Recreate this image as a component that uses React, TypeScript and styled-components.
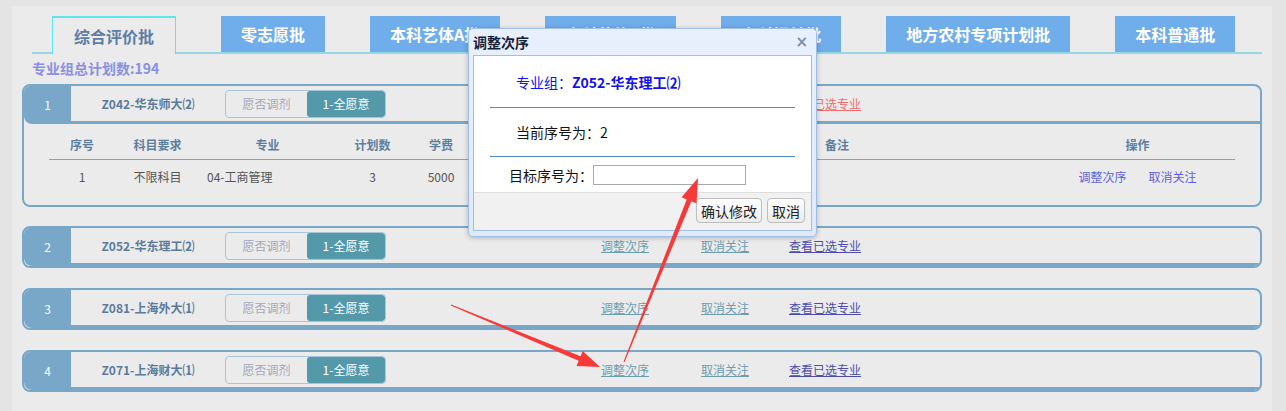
import React from 'react';
import styled, { createGlobalStyle } from 'styled-components';

const GlobalStyle = createGlobalStyle`
  html, body { margin: 0; padding: 0; background: #e4e4e4; }
  body { font-family: "Noto Sans CJK SC", "Noto Sans", sans-serif; }
  * { box-sizing: border-box; }
`;

const Page = styled.div`
  position: relative;
  width: 1286px;
  height: 411px;
  overflow: hidden;
  padding: 6px 14px 0 12px;
`;

const Panel = styled.div`
  background: #ebebeb;
  height: 405px;
  padding: 10px 10px 0 10px;
`;

const TabBar = styled.div`
  display: flex;
  gap: 45px;
  margin-left: 10px;
  padding-left: 20px;
  height: 38px;
  border-bottom: 2px solid #94d8e7;
`;

const Tab = styled.div<{ $active?: boolean }>`
  flex: none;
  height: ${(p) => (p.$active ? '38px' : '36px')};
  padding: 0 ${(p) => (p.$active ? '21px' : '20px')};
  display: flex;
  align-items: ${(p) => (p.$active ? 'flex-start' : 'center')};
  padding-top: ${(p) => (p.$active ? '8px' : '0')};
  font-size: 16px;
  font-weight: bold;
  line-height: 20px;
  white-space: nowrap;
  color: ${(p) => (p.$active ? '#5c7ea6' : '#ffffff')};
  background: ${(p) => (p.$active ? '#ebebeb' : '#70adeb')};
  border: ${(p) => (p.$active ? '1px solid #5ee4e9' : 'none')};
  border-top-width: ${(p) => (p.$active ? '2px' : '0')};
  border-bottom: none;
  margin-bottom: ${(p) => (p.$active ? '-2px' : '0')};
  position: relative;
`;

const Summary = styled.div`
  margin: 4px 0 6px 10px;
  font-size: 14px;
  line-height: 20px;
  font-weight: bold;
  color: #8b8fe0;
`;

const Card = styled.div<{ $expanded?: boolean }>`
  border: 2px solid #79a7c7;
  border-radius: 8px;
  overflow: hidden;
  margin-bottom: ${(p) => (p.$expanded ? '19px' : '20px')};
`;

const Header = styled.div`
  display: flex;
  height: 38px;
`;

const NumCell = styled.div`
  flex: none;
  width: 47px;
  background: #79a7c7;
  border-bottom-left-radius: 8px;
  color: #fff;
  font-size: 12px;
  display: flex;
  align-items: center;
  justify-content: center;
  padding-bottom: 2px;
`;

const HeaderMain = styled.div`
  flex: 1;
  display: flex;
  align-items: center;
  border-bottom: 3px solid #79a7c7;
`;

const GroupName = styled.div`
  flex: none;
  width: 154px;
  text-align: center;
  font-size: 12px;
  font-weight: bold;
  color: #5a7b9c;
  line-height: 18px;
`;

const Toggle = styled.div`
  flex: none;
  display: flex;
  width: 161px;
  height: 28px;
  border: 1px solid #a9c5da;
  border-radius: 4px;
  overflow: hidden;
`;

const ToggleSeg = styled.div<{ $on?: boolean }>`
  flex: ${(p) => (p.$on ? '0 0 78px' : '1')};
  display: flex;
  align-items: center;
  justify-content: center;
  font-size: 12px;
  color: ${(p) => (p.$on ? '#ffffff' : '#a3a8bb')};
  background: ${(p) => (p.$on ? '#5499aa' : 'transparent')};
  border-radius: ${(p) => (p.$on ? '3px' : '0')};
`;

const HeadLink = styled.a<{ $gap: number; $tone: 'teal' | 'indigo' | 'red' }>`
  flex: none;
  margin-left: ${(p) => p.$gap}px;
  font-size: 12px;
  line-height: 16px;
  text-decoration: underline;
  cursor: pointer;
  color: ${(p) => (p.$tone === 'teal' ? '#6d9cad' : p.$tone === 'red' ? '#ee6f6f' : '#4c4ca8')};
`;

const Body = styled.div`
  padding: 6px 25px 13px 25px;
`;

const Grid = styled.div`
  display: grid;
  grid-template-columns: 66px 85px 135px 75px 62px 338px 230px 195px;
`;

const HeadCell = styled.div<{ $align?: string }>`
  height: 30px;
  display: flex;
  align-items: center;
  justify-content: ${(p) => p.$align || 'center'};
  padding-left: ${(p) => (p.$align === 'flex-start' ? '15px' : '0')};
  font-size: 12px;
  font-weight: bold;
  color: #5d7f9e;
  border-bottom: 1px solid #79a7c7;
`;

const DataCell = styled.div<{ $align?: string; $pad?: number }>`
  height: 32px;
  display: flex;
  align-items: center;
  justify-content: ${(p) => p.$align || 'center'};
  padding-left: ${(p) => p.$pad || 0}px;
  gap: 22px;
  font-size: 12px;
  color: #555;
`;

const OpLink = styled.a`
  font-size: 12px;
  color: #5f5fdc;
  cursor: pointer;
`;

/* ---------- dialog ---------- */
const Dialog = styled.div`
  position: absolute;
  left: 468px;
  top: 28px;
  width: 349px;
  height: 209px;
  background: linear-gradient(#e8f0fd, #dfe9f8);
  border: 1px solid #9fbfe8;
  border-radius: 5px;
  box-shadow: 0 1px 5px rgba(0, 0, 0, 0.25);
  padding: 0 4px 5px 4px;
  display: flex;
  flex-direction: column;
`;

const TitleBar = styled.div`
  height: 26px;
  display: flex;
  align-items: center;
  justify-content: space-between;
  padding-right: 4px;
`;

const Title = styled.div`
  font-size: 14px;
  font-weight: bold;
  color: #15223a;
  line-height: 18px;
`;

const Close = styled.div`
  font-family: "DejaVu Sans", sans-serif;
  font-size: 15px;
  font-weight: bold;
  color: #7b8ea9;
  line-height: 15px;
`;

const DialogInner = styled.div`
  flex: 1;
  border: 1px solid #9fbfe8;
  background: #fff;
  display: flex;
  flex-direction: column;
`;

const Section = styled.div<{ $h: number; $line?: boolean; $indent: number }>`
  height: ${(p) => p.$h}px;
  margin: 0 16px;
  padding-left: ${(p) => p.$indent}px;
  display: flex;
  align-items: center;
  border-bottom: ${(p) => (p.$line ? '1px solid #4a8bc2' : 'none')};
  font-size: 14px;
  color: #111;
`;

const Label = styled.span<{ $blue?: boolean; $bold?: boolean }>`
  color: ${(p) => (p.$blue ? '#1010f0' : '#111')};
  font-weight: ${(p) => (p.$bold ? 'bold' : 'normal')};
`;

const Input = styled.div`
  width: 153px;
  height: 20px;
  border: 1px solid #a9a9a9;
  background: #fff;
`;

const Footer = styled.div`
  flex: 1;
  background: #f1f1f1;
  border-top: 1px solid #dedede;
  display: flex;
  justify-content: flex-end;
  align-items: flex-start;
  gap: 5px;
  padding: 5px 6px 0 0;
`;

const Button = styled.button`
  height: 25px;
  padding: 0 4px;
  font-family: inherit;
  font-size: 14px;
  color: #222;
  border: 1px solid #bdbdbd;
  border-radius: 4px;
  background: linear-gradient(#ffffff, #ebebeb);
  line-height: 20px;
`;

const Overlay = styled.svg`
  position: absolute;
  left: 0;
  top: 0;
  pointer-events: none;
`;

const tabs = ['综合评价批', '零志愿批', '本科艺体A批', '本科艺体B批', '专科提前批', '地方农村专项计划批', '本科普通批'];

const groups = [
  { n: 1, code: 'Z042', name: '华东师大', c: '⑵', expanded: true },
  { n: 2, code: 'Z052', name: '华东理工', c: '⑵' },
  { n: 3, code: 'Z081', name: '上海外大', c: '⑴' },
  { n: 4, code: 'Z071', name: '上海财大', c: '⑴' },
];

export default function App() {
  return (
    <Page>
      <GlobalStyle />
      <Panel>
        <TabBar>
          {tabs.map((t, i) => (
            <Tab key={t} $active={i === 0}>
              {t}
            </Tab>
          ))}
        </TabBar>
        <Summary>专业组总计划数:194</Summary>
        {groups.map((g) => (
          <Card key={g.n} $expanded={g.expanded}>
            <Header>
              <NumCell>{g.n}</NumCell>
              <HeaderMain>
                <GroupName>
                  {g.code}-{g.name}
                  {g.c}
                </GroupName>
                <Toggle>
                  <ToggleSeg>愿否调剂</ToggleSeg>
                  <ToggleSeg $on>1-全愿意</ToggleSeg>
                </Toggle>
                <HeadLink $gap={215} $tone="teal">调整次序</HeadLink>
                <HeadLink $gap={52} $tone="teal">取消关注</HeadLink>
                <HeadLink $gap={40} $tone={g.expanded ? 'red' : 'indigo'}>
                  查看已选专业
                </HeadLink>
              </HeaderMain>
            </Header>
            {g.expanded && (
              <Body>
                <Grid>
                  <HeadCell>序号</HeadCell>
                  <HeadCell>科目要求</HeadCell>
                  <HeadCell>专业</HeadCell>
                  <HeadCell>计划数</HeadCell>
                  <HeadCell>学费</HeadCell>
                  <HeadCell />
                  <HeadCell $align="flex-start">备注</HeadCell>
                  <HeadCell>操作</HeadCell>
                  <DataCell>1</DataCell>
                  <DataCell>不限科目</DataCell>
                  <DataCell $align="flex-start" $pad={7}>
                    04-工商管理
                  </DataCell>
                  <DataCell>3</DataCell>
                  <DataCell>5000</DataCell>
                  <DataCell />
                  <DataCell />
                  <DataCell>
                    <OpLink>调整次序</OpLink>
                    <OpLink>取消关注</OpLink>
                  </DataCell>
                </Grid>
              </Body>
            )}
          </Card>
        ))}
      </Panel>

      <Dialog>
        <TitleBar>
          <Title>调整次序</Title>
          <Close>×</Close>
        </TitleBar>
        <DialogInner>
          <Section $h={52} $line $indent={26}>
            <Label $blue>专业组：</Label>
            <Label $blue $bold>
              Z052-华东理工⑵
            </Label>
          </Section>
          <Section $h={49} $line $indent={26}>
            当前序号为：2
          </Section>
          <Section $h={35} $indent={19}>
            <span>目标序号为：</span>
            <Input />
          </Section>
          <Footer>
            <Button>确认修改</Button>
            <Button>取消</Button>
          </Footer>
        </DialogInner>
      </Dialog>

      <Overlay width={1286} height={411} viewBox="0 0 1286 411">
        <polygon
          fill="#f63a3a"
          points="450.8,305.5 578.6,360.8 576.5,365.9 600,367 582.7,351.1 580.6,356.2 451.2,304.5"
        />
        <polygon
          fill="#f63a3a"
          points="624.5,362.2 691.4,201.2 696.5,203.3 698,178 681.6,197.3 686.7,199.4 623.5,361.8"
        />
      </Overlay>
    </Page>
  );
}
